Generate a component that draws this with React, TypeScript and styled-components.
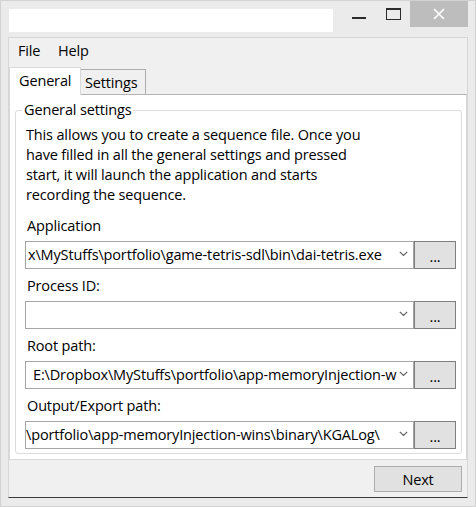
import React from "react";
import styled, { createGlobalStyle } from "styled-components";

const Global = createGlobalStyle`
  html, body { margin: 0; padding: 0; background: #ebebeb; }
  body {
    font-family: "Open Sans", "Noto Sans", sans-serif;
    font-size: 14.5px;
    letter-spacing: -0.15px;
    color: #000;
  }
  * { box-sizing: border-box; }
`;

const Window = styled.div`
  width: 476px;
  height: 507px;
  display: flex;
  flex-direction: column;
  background: #ebebeb;
  border: 1px solid #d2d2d2;
`;

const TitleBar = styled.div`
  height: 36px;
  flex: none;
  display: flex;
  align-items: flex-start;
  padding-right: 7px;
`;

const TitleBox = styled.div`
  margin: 8px 0 0 8px;
  width: 324px;
  height: 23px;
  background: #ffffff;
`;

const Spacer = styled.div`
  flex: 1;
`;

const CaptionButton = styled.div<{ $w: number; $pt: number; $bg?: string }>`
  width: ${(p) => p.$w}px;
  height: 26px;
  display: flex;
  justify-content: center;
  align-items: flex-start;
  padding-top: ${(p) => p.$pt}px;
  background: ${(p) => p.$bg || "transparent"};
`;

const MinGlyph = styled.div`
  width: 14px;
  height: 2px;
  background: #2b2b2b;
`;

const MaxGlyph = styled.div`
  width: 15px;
  height: 12px;
  border: 1px solid #2b2b2b;
  border-top-width: 2px;
`;

const Client = styled.div`
  flex: 1;
  margin: 0 7px 8px 7px;
  display: flex;
  flex-direction: column;
  background: #f0f0f0;
  border: 1px solid #d6d6d6;
  border-bottom-color: #3a3a3a;
`;

const MenuBar = styled.div`
  height: 29px;
  flex: none;
  display: flex;
  align-items: center;
  padding-left: 9px;
  padding-bottom: 5px;
`;

const MenuItem = styled.div`
  min-width: 40px;
`;

const TabStrip = styled.div`
  height: 27px;
  flex: none;
  display: flex;
  align-items: flex-end;
`;

const Tab = styled.div<{ $active?: boolean }>`
  position: relative;
  height: ${(p) => (p.$active ? 28 : 25)}px;
  width: ${(p) => (p.$active ? 72 : 65)}px;
  margin-bottom: ${(p) => (p.$active ? -1 : 0)}px;
  z-index: ${(p) => (p.$active ? 1 : 0)};
  background: ${(p) => (p.$active ? "#ffffff" : "#f0f0f0")};
  border: 1px solid ${(p) => (p.$active ? "#d9d9d9" : "#acacac")};
  border-bottom: none;
  border-left: ${(p) => (p.$active ? "1px solid #d9d9d9" : "none")};
  padding-left: ${(p) => (p.$active ? 9 : 4)}px;
  display: flex;
  align-items: center;
  padding-bottom: ${(p) => (p.$active ? 2 : 0)}px;
`;

const TabPage = styled.div`
  height: 366px;
  width: 458px;
  flex: none;
  background: #ffffff;
  border: 1px solid #d9d9d9;
  border-top-color: #b4b4b4;
  padding: 5px 4px 0 5px;
`;

const Group = styled.fieldset`
  margin: 0;
  border: 1px solid #dcdcdc;
  border-radius: 3px;
  padding: 5px 5px 4px 9px;
  min-width: 0;
`;

const Legend = styled.legend`
  margin-left: -3px;
  padding: 0 2px;
  line-height: 20px;
`;

const Description = styled.div`
  padding-left: 1px;
  line-height: 20px;
  white-space: nowrap;
`;

const Fields = styled.div`
  margin-top: 11px;
  display: flex;
  flex-direction: column;
  gap: 7px;
`;

const Field = styled.div`
  display: flex;
  flex-direction: column;
  gap: 5px;
`;

const Label = styled.div`
  padding-left: 2px;
  line-height: 20px;
`;

const Row = styled.div`
  display: flex;
  height: 28px;
`;

const Combo = styled.div`
  flex: 1;
  min-width: 0;
  display: flex;
  align-items: center;
  background: #ffffff;
  border: 1px solid #a6a6a6;
`;

const ComboText = styled.div<{ $indent: number }>`
  flex: 1;
  min-width: 0;
  overflow: hidden;
  white-space: nowrap;
  padding-left: ${(p) => p.$indent}px;
  line-height: 20px;
`;

const Chevron = styled.div`
  width: 16px;
  flex: none;
  display: flex;
  justify-content: flex-start;
  padding-left: 2px;
  padding-bottom: 2px;
`;

const Browse = styled.div`
  width: 42px;
  flex: none;
  background: #e1e1e1;
  border: 1px solid #7f7f7f;
  display: flex;
  justify-content: center;
  align-items: center;
  padding-top: 2px;
`;

const Footer = styled.div`
  flex: 1;
  display: flex;
  justify-content: flex-end;
  align-items: flex-start;
  padding: 6px 5px 0 0;
`;

const Button = styled.div`
  width: 88px;
  height: 26px;
  background: #e1e1e1;
  border: 1px solid #adadad;
  display: flex;
  justify-content: center;
  align-items: center;
`;

const fields = [
  { label: "Application", value: "x\\MyStuffs\\portfolio\\game-tetris-sdl\\bin\\dai-tetris.exe", indent: 2 },
  { label: "Process ID:", value: "", indent: 2 },
  { label: "Root path:", value: "E:\\Dropbox\\MyStuffs\\portfolio\\app-memoryInjection-wins\\", indent: 7 },
  { label: "Output/Export path:", value: "\\portfolio\\app-memoryInjection-wins\\binary\\KGALog\\", indent: 0 },
];

export default function App() {
  return (
    <>
      <Global />
      <Window>
        <TitleBar>
          <TitleBox />
          <Spacer />
          <CaptionButton $w={34} $pt={16}>
            <MinGlyph />
          </CaptionButton>
          <CaptionButton $w={34} $pt={7}>
            <MaxGlyph />
          </CaptionButton>
          <CaptionButton $w={58} $pt={7} $bg="#bdbdbd">
            <svg width="12" height="12" viewBox="0 0 12 12">
              <path d="M1 1 L11 11 M11 1 L1 11" stroke="#ffffff" strokeWidth="1.6" />
            </svg>
          </CaptionButton>
        </TitleBar>
        <Client>
          <MenuBar>
            <MenuItem>File</MenuItem>
            <MenuItem>Help</MenuItem>
          </MenuBar>
          <TabStrip>
            <Tab $active>General</Tab>
            <Tab>Settings</Tab>
          </TabStrip>
          <TabPage>
            <Group>
              <Legend>General settings</Legend>
              <Description>
                This allows you to create a sequence file. Once you
                <br />
                have filled in all the general settings and pressed
                <br />
                start, it will launch the application and starts
                <br />
                recording the sequence.
              </Description>
              <Fields>
                {fields.map((f) => (
                  <Field key={f.label}>
                    <Label>{f.label}</Label>
                    <Row>
                      <Combo>
                        <ComboText $indent={f.indent}>{f.value}</ComboText>
                        <Chevron>
                          <svg width="9" height="6" viewBox="0 0 9 6">
                            <path d="M0.8 0.8 L4.5 4.5 L8.2 0.8" fill="none" stroke="#606060" strokeWidth="1.2" />
                          </svg>
                        </Chevron>
                      </Combo>
                      <Browse>...</Browse>
                    </Row>
                  </Field>
                ))}
              </Fields>
            </Group>
          </TabPage>
          <Footer>
            <Button>Next</Button>
          </Footer>
        </Client>
      </Window>
    </>
  );
}
